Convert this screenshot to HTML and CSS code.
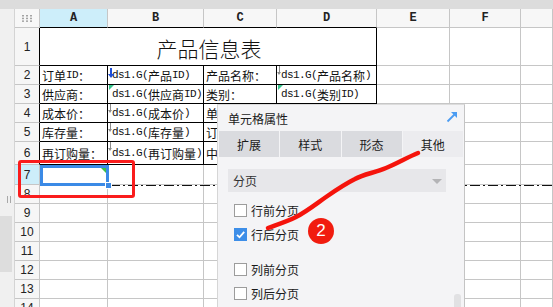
FILE: index.html
```html
<!DOCTYPE html>
<html lang="zh-CN">
<head>
  <meta charset="UTF-8">
  <title>单元格属性 - 分页</title>
  <link rel="stylesheet" href="styles.css">
</head>
<body>
  <div class="app">
    <div class="topbar"></div>
    <div class="main">
      <div class="strip">
        <span class="grip"></span>
        <span class="strip-thumb"></span>
      </div>
      <div class="sheet">
        <!-- column headers -->
        <div class="c h corner">
          <svg width="10" height="7" viewBox="0 0 10 7">
            <g fill="#a4a4a4">
              <rect x="0" y="0" width="2" height="1.5"/><rect x="4" y="0" width="2" height="1.5"/><rect x="8" y="0" width="2" height="1.5"/>
              <rect x="0" y="2.7" width="2" height="1.5"/><rect x="4" y="2.7" width="2" height="1.5"/><rect x="8" y="2.7" width="2" height="1.5"/>
              <rect x="0" y="5.4" width="2" height="1.5"/><rect x="4" y="5.4" width="2" height="1.5"/><rect x="8" y="5.4" width="2" height="1.5"/>
            </g>
          </svg>
        </div>
        <div class="c h on bb">A</div>
        <div class="c h bb">B</div>
        <div class="c h bb">C</div>
        <div class="c h bb">D</div>
        <div class="c h">E</div>
        <div class="c h">F</div>
        <div class="c h"></div>

        <!-- row 1 -->
        <div class="c rh br">1</div>
        <div class="c t title">产品信息表</div>
        <div class="c"></div>
        <div class="c"></div>
        <div class="c"></div>

        <!-- row 2 -->
        <div class="c rh br">2</div>
        <div class="c t">订单<span class="en">ID</span>：</div>
        <div class="c t ds"><i class="mk mk-blue"></i><span class="en">ds1.G(</span>产品<span class="en">ID)</span></div>
        <div class="c t">产品名称：</div>
        <div class="c t ds"><i class="mk mk-gray"></i><span class="en">ds1.G(</span>产品名称<span class="en">)</span></div>
        <div class="c"></div>
        <div class="c"></div>
        <div class="c"></div>

        <!-- row 3 -->
        <div class="c rh br">3</div>
        <div class="c t">供应商：</div>
        <div class="c t ds"><i class="mk mk-green"></i><span class="en">ds1.G(</span>供应商<span class="en">ID)</span></div>
        <div class="c t">类别：</div>
        <div class="c t ds"><i class="mk mk-green"></i><span class="en">ds1.G(</span>类别<span class="en">ID)</span></div>
        <div class="c"></div>
        <div class="c"></div>
        <div class="c"></div>

        <!-- row 4 -->
        <div class="c rh br">4</div>
        <div class="c t">成本价：</div>
        <div class="c t ds"><i class="mk mk-gray"></i><span class="en">ds1.G(</span>成本价<span class="en">)</span></div>
        <div class="c t">单位：</div>
        <div class="c t ds"><i class="mk mk-gray"></i><span class="en">ds1.G(</span>单位<span class="en">)</span></div>
        <div class="c"></div>
        <div class="c"></div>
        <div class="c"></div>

        <!-- row 5 -->
        <div class="c rh br">5</div>
        <div class="c t">库存量：</div>
        <div class="c t ds"><i class="mk mk-gray"></i><span class="en">ds1.G(</span>库存量<span class="en">)</span></div>
        <div class="c t">订购量：</div>
        <div class="c t ds"><i class="mk mk-gray"></i><span class="en">ds1.G(</span>订购量<span class="en">)</span></div>
        <div class="c"></div>
        <div class="c"></div>
        <div class="c"></div>

        <!-- row 6 -->
        <div class="c rh br">6</div>
        <div class="c t">再订购量：</div>
        <div class="c t ds"><i class="mk mk-gray"></i><span class="en">ds1.G(</span>再订购量<span class="en">)</span></div>
        <div class="c t">中止：</div>
        <div class="c t ds"><i class="mk mk-gray"></i><span class="en">ds1.G(</span>中止<span class="en">)</span></div>
        <div class="c"></div>
        <div class="c"></div>
        <div class="c"></div>

        <!-- row 7 -->
        <div class="c rh on">7</div>
        <div class="c"></div><div class="c"></div><div class="c"></div><div class="c"></div><div class="c"></div><div class="c"></div><div class="c"></div>

        <div class="c rh">8</div>
        <div class="c"></div><div class="c"></div><div class="c"></div><div class="c"></div><div class="c"></div><div class="c"></div><div class="c"></div>
        <div class="c rh">9</div>
        <div class="c"></div><div class="c"></div><div class="c"></div><div class="c"></div><div class="c"></div><div class="c"></div><div class="c"></div>
        <div class="c rh">10</div>
        <div class="c"></div><div class="c"></div><div class="c"></div><div class="c"></div><div class="c"></div><div class="c"></div><div class="c"></div>
        <div class="c rh">11</div>
        <div class="c"></div><div class="c"></div><div class="c"></div><div class="c"></div><div class="c"></div><div class="c"></div><div class="c"></div>
        <div class="c rh">12</div>
        <div class="c"></div><div class="c"></div><div class="c"></div><div class="c"></div><div class="c"></div><div class="c"></div><div class="c"></div>
        <div class="c rh">13</div>
        <div class="c"></div><div class="c"></div><div class="c"></div><div class="c"></div><div class="c"></div><div class="c"></div><div class="c"></div>
        <div class="c rh">14</div>
        <div class="c"></div><div class="c"></div><div class="c"></div><div class="c"></div><div class="c"></div><div class="c"></div><div class="c"></div>
      </div>
    </div>

    <!-- overlays -->
    <div class="page-break"></div>
    <div class="selection"><i class="sel-corner"></i><i class="sel-handle"></i></div>
    <div class="mark-box"></div>

    <div class="panel">
      <div class="p-head">
        <span>单元格属性</span>
        <svg class="p-pop" width="12" height="12" viewBox="0 0 12 12">
          <line x1="1.5" y1="10.5" x2="9" y2="3" stroke="#4b9cf2" stroke-width="1.8"/>
          <polygon points="5,1 11,1 11,7" fill="#4b9cf2"/>
        </svg>
      </div>
      <div class="tabs">
        <div class="tab">扩展</div>
        <div class="tab">样式</div>
        <div class="tab">形态</div>
        <div class="tab active">其他</div>
      </div>
      <div class="p-body">
        <div class="select">
          <span>分页</span>
          <i class="caret"></i>
        </div>
        <div class="checks">
          <label class="chk"><i class="box"></i>行前分页</label>
          <label class="chk"><i class="box checked">
            <svg width="13" height="13" viewBox="0 0 13 13"><polyline points="3,6.8 5.5,9.3 10.2,3.8" fill="none" stroke="#fff" stroke-width="1.8"/></svg>
          </i>行后分页</label>
        </div>
        <div class="checks">
          <label class="chk"><i class="box"></i>列前分页</label>
          <label class="chk"><i class="box"></i>列后分页</label>
        </div>
      </div>
      <div class="p-thumb"></div>
    </div>

    <svg class="scribble" width="553" height="307" viewBox="0 0 553 307">
      <path d="M418,153 C408,157 396,164 386,168 C374,173 364,174 355,179 C345,184 336,190 326,197 C316,204 306,212 296,217 C286,222 276,225 268,228"
            fill="none" stroke="#f5140c" stroke-width="4.5" stroke-linecap="round" stroke-linejoin="round"/>
    </svg>
    <div class="badge">2</div>
  </div>
</body>
</html>
```

FILE: styles.css
```css
* {
  box-sizing: border-box;
}
body {
  margin: 0;
  width: 553px;
  height: 307px;
  overflow: hidden;
  background-color: #ffffff;
  font-family: "Noto Sans CJK SC", sans-serif;
  color: #111;
}
.app {
  position: relative;
  height: 307px;
  overflow: hidden;
}
.topbar {
  height: 9px;
  background-color: #dcdcdc;
}
.main {
  display: flex;
  height: 298px;
}
.strip {
  position: relative;
  width: 15px;
  flex-shrink: 0;
  background-color: #f0f0f0;
  border-right: 1px solid #d4d4d4;
}
.grip {
  position: absolute;
  left: 7px;
  top: 187px;
  width: 4px;
  height: 7px;
  border-left: 1px solid #a8a8a8;
  border-right: 1px solid #a8a8a8;
}
.strip-thumb {
  position: absolute;
  left: 0;
  top: 207px;
  width: 12px;
  height: 56px;
  background-color: #dddddd;
}

/* sheet grid */
.sheet {
  flex: 1;
  display: grid;
  grid-template-columns: 25px 68px 96px 73px 100px 73px 71px 1fr;
  grid-template-rows: 19px 38px 19px 19px 19px 19px 23px 20px;
  grid-auto-rows: 19px;
  align-content: start;
}
.c {
  position: relative;
  display: flex;
  align-items: center;
  padding-left: 2px;
  overflow: hidden;
  white-space: nowrap;
  font-size: 12px;
  border-right: 1px solid #c6c6c6;
  border-bottom: 1px solid #c6c6c6;
}
.h {
  justify-content: center;
  padding: 0;
  background-color: #f7f7f7;
  font-family: "Liberation Mono", monospace;
  font-size: 12px;
  font-weight: bold;
  color: #222;
}
.rh {
  justify-content: center;
  padding: 0;
  background-color: #f6f6f6;
  font-family: "Liberation Sans", sans-serif;
  font-size: 12px;
  color: #222;
}
.on {
  background-color: #cdeefa;
}
.t {
  border-right-color: #000;
  border-bottom-color: #000;
}
.bb {
  border-bottom-color: #000;
}
.br {
  border-right-color: #000;
}
.title {
  grid-column: span 4;
  justify-content: center;
  font-size: 21px;
  font-weight: 300;
  padding-top: 2px;
}
.ds {
  padding-left: 4px;
}
.en {
  font-family: "Liberation Mono", monospace;
  font-size: 11px;
  letter-spacing: -0.6px;
}

/* cell markers */
.mk {
  position: absolute;
  left: 1px;
  top: 0;
  width: 5px;
  height: 8px;
}
.mk-gray {
  border-left: 1px solid #8c8c8c;
  left: 2px;
  height: 6px;
}
.mk-gray::after {
  content: "";
  position: absolute;
  left: -3px;
  bottom: -3px;
  border-left: 2.5px solid transparent;
  border-right: 2.5px solid transparent;
  border-top: 3px solid #8c8c8c;
}
.mk-blue {
  border-left: 2px solid #1f4fd8;
  left: 2px;
  top: 2px;
  height: 7px;
}
.mk-blue::after {
  content: "";
  position: absolute;
  left: -4px;
  bottom: -3px;
  border-left: 3px solid transparent;
  border-right: 3px solid transparent;
  border-top: 4px solid #1f4fd8;
}
.mk-green {
  width: 0;
  height: 0;
  border-top: 5px solid #36c58d;
  border-right: 5px solid transparent;
}

/* overlays on the sheet */
.page-break {
  position: absolute;
  left: 110px;
  right: 0;
  top: 185px;
  height: 1px;
  background: repeating-linear-gradient(90deg, #111 0 10px, transparent 10px 13px, #111 13px 15px, transparent 15px 18px);
}
.selection {
  position: absolute;
  left: 40px;
  top: 165px;
  width: 69px;
  height: 21px;
  border: 3px solid #3b8ae6;
}
.sel-corner {
  position: absolute;
  right: 0;
  top: 0;
  width: 0;
  height: 0;
  border-top: 5px solid #3cc24a;
  border-left: 5px solid transparent;
}
.sel-handle {
  position: absolute;
  right: -6px;
  bottom: -6px;
  width: 7px;
  height: 7px;
  background-color: #3b8ae6;
  border: 1px solid #ffffff;
}
.mark-box {
  position: absolute;
  left: 18px;
  top: 160px;
  width: 117px;
  height: 38px;
  border: 3px solid #fa1c1c;
  border-radius: 3px;
}

/* property panel */
.panel {
  position: absolute;
  left: 217px;
  top: 104px;
  width: 248px;
  height: 220px;
  background-color: #f4f4f6;
  border-left: 1px solid #d6d6d6;
  border-right: 1px solid #c4c4c4;
  border-top: 1px solid #dcdcdc;
  font-size: 12px;
  color: #1a1a1a;
}
.p-head {
  display: flex;
  align-items: center;
  justify-content: space-between;
  height: 26px;
  padding: 0 6px 0 10px;
}
.p-pop {
  margin-top: -3px;
}
.tabs {
  display: flex;
  gap: 1px;
  margin: 0 1px;
  height: 26px;
}
.tab {
  flex: 1;
  display: flex;
  align-items: center;
  justify-content: center;
  background-color: #dadbdf;
}
.tab.active {
  background-color: #ececef;
}
.p-body {
  padding: 12px 18px 0 10px;
}
.select {
  display: flex;
  align-items: center;
  justify-content: space-between;
  height: 23px;
  padding: 0 4px 0 5px;
  background-color: #e7e7ea;
  color: #333;
}
.caret {
  width: 0;
  height: 0;
  margin-top: 2px;
  border-left: 5px solid transparent;
  border-right: 5px solid transparent;
  border-top: 5px solid #b4b4b6;
}
.checks {
  display: flex;
  flex-direction: column;
  gap: 11px;
  margin-top: 12px;
  padding-left: 6px;
}
.checks + .checks {
  margin-top: 22px;
}
.chk {
  display: flex;
  align-items: center;
  gap: 4px;
  height: 13px;
}
.box {
  width: 13px;
  height: 13px;
  background-color: #ffffff;
  border: 1px solid #9c9c9c;
}
.box.checked {
  background-color: #3d8ee8;
  border-color: #3d8ee8;
}
.box.checked svg {
  display: block;
  margin: -1px;
}
.p-thumb {
  position: absolute;
  left: 236px;
  top: 189px;
  width: 7px;
  height: 24px;
  border-radius: 3px;
  background-color: #e1e1e3;
}

/* annotations */
.scribble {
  position: absolute;
  left: 0;
  top: 0;
  pointer-events: none;
}
.badge {
  position: absolute;
  left: 308px;
  top: 218px;
  width: 26px;
  height: 26px;
  border-radius: 50%;
  background-color: #f11c0f;
  color: #ffffff;
  font-family: "Liberation Sans", sans-serif;
  font-size: 17px;
  line-height: 26px;
  text-align: center;
}
```
